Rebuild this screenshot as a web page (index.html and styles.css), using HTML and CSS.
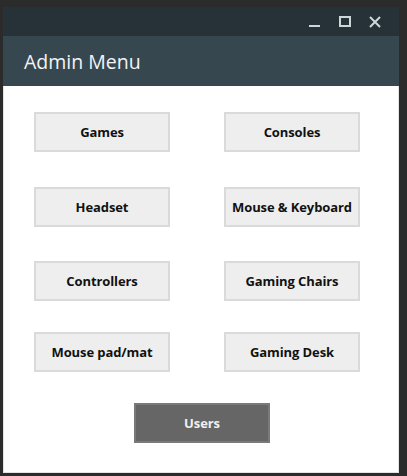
FILE: index.html
```html
<!DOCTYPE html>
<html>
<head>
<meta charset="utf-8">
<link rel="stylesheet" href="styles.css">
</head>
<body>
<div class="window">
  <div class="titlebar">
    <span class="ctl min"><svg width="12" height="12" viewBox="0 0 12 12"><rect x="0" y="9" width="11" height="2" fill="#cfd6d9"/></svg></span>
    <span class="ctl max"><svg width="12" height="12" viewBox="0 0 12 12"><rect x="1" y="1" width="10" height="9" fill="none" stroke="#cfd6d9" stroke-width="2"/></svg></span>
    <span class="ctl close"><svg width="12" height="12" viewBox="0 0 12 12"><path d="M1 1L11 11M11 1L1 11" stroke="#cfd6d9" stroke-width="2"/></svg></span>
  </div>
  <div class="header">Admin Menu</div>
  <div class="content">
    <div class="grid">
      <button class="btn">Games</button>
      <button class="btn">Consoles</button>
      <button class="btn">Headset</button>
      <button class="btn">Mouse &amp; Keyboard</button>
      <button class="btn">Controllers</button>
      <button class="btn">Gaming Chairs</button>
      <button class="btn">Mouse pad/mat</button>
      <button class="btn">Gaming Desk</button>
    </div>
    <div class="bottom">
      <button class="btn users">Users</button>
    </div>
  </div>
</div>
</body>
</html>
```
FILE: styles.css
```css
html, body {
  margin: 0;
  padding: 0;
  background: #2b2b2b;
  height: 476px;
  overflow: hidden;
}
body {
  padding: 7px 0 0 3px;
  box-sizing: border-box;
}
.window {
  width: 396px;
  height: 466px;
  display: flex;
  flex-direction: column;
  background: #fff;
  border: 1px solid #e3e3e3;
  border-top: none;
  box-sizing: border-box;
}
.titlebar {
  height: 29px;
  background: #263238;
  display: flex;
  justify-content: flex-end;
  align-items: center;
  gap: 18px;
  padding-right: 18px;
  margin: 0 -1px;
}
.ctl {
  display: flex;
  width: 12px;
  height: 12px;
}
.header {
  height: 50px;
  background: #37474f;
  color: #f2f4f5;
  font-family: "Open Sans", "Noto Sans", sans-serif;
  font-size: 19.5px;
  display: flex;
  align-items: center;
  padding-left: 21px;
  margin: 0 -1px;
}
.content {
  flex: 1;
  display: flex;
  flex-direction: column;
  padding: 26px 0 0 30px;
}
.grid {
  display: grid;
  grid-template-columns: 136px 136px;
  grid-template-rows: 75px 74px 71px 40px;
  column-gap: 54px;
  align-items: start;
}
.bottom {
  display: flex;
  justify-content: center;
  width: 336px;
  margin-top: 31px;
}
.btn {
  width: 136px;
  height: 40px;
  background: #eeeeee;
  border: 2px solid #dadada;
  font-family: "Open Sans", "Noto Sans", sans-serif;
  font-weight: 700;
  font-size: 13px;
  letter-spacing: -0.1px;
  color: #111;
  padding: 0;
  margin: 0;
}
.users {
  background: #666666;
  border-color: #7a7a7a;
  color: #f0f0f0;
}
```
